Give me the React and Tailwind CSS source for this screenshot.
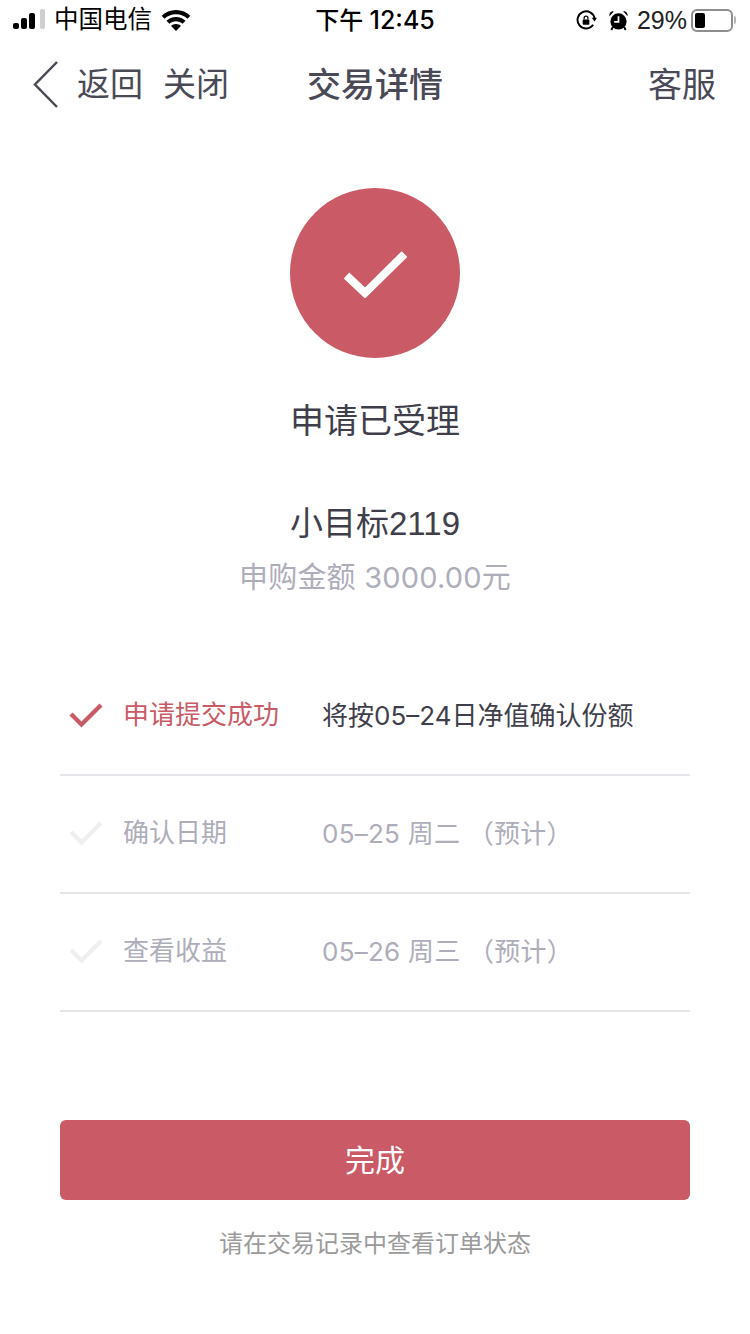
import React from 'react';

const FONT = "font-['Liberation_Sans','Noto_Sans_CJK_SC',sans-serif]";
// digits in the reference are wider than Arial's
const WIDE = "font-['Inter','Noto_Sans_CJK_SC',sans-serif]";

function Check({ className }) {
  return (
    <svg viewBox="0 0 34 26" className={className} fill="none" stroke="currentColor" strokeWidth="4.300">
      <path d="M2 12 L12.500 22.500 L32 3" />
    </svg>
  );
}

function StatusBar() {
  return (
    <div className="flex h-10 items-center justify-between pl-[13px] pr-[17px] text-black">
      <div className="flex w-[220px] items-center">
        <div className="mb-[2px] flex items-end gap-[2px]">
          <span className="h-[6px] w-[6px] rounded-[2px] bg-black" />
          <span className="h-[11px] w-[6px] rounded-[2px] bg-black" />
          <span className="h-[16px] w-[6px] rounded-[2px] bg-black" />
          <span className="ml-[3px] h-[20px] w-[5px] rounded-[2px] bg-[#cfcfcf]" />
        </div>
        <span className="ml-[9px] text-[24.500px] leading-none">中国电信</span>
        <svg viewBox="0 0 30 22" className="ml-[9px] h-[22px] w-[30px]" fill="black">
          <path d="M15 1C9.4 1 4.4 3.2 .7 6.7l2.8 3C6.500 6.900 10.500 5.200 15 5.200s8.500 1.700 11.500 4.500l2.800-3C25.600 3.200 20.600 1 15 1z" />
          <path d="M15 8C11.300 8 8 9.400 5.500 11.700l2.900 3C10.200 13.100 12.500 12.200 15 12.200s4.800.9 6.600 2.500l2.900-3C22 9.400 18.700 8 15 8z" />
          <path d="M15 15c-1.900 0-3.600.7-4.900 1.900L15 22l4.900-5.100C18.600 15.700 16.900 15 15 15z" />
        </svg>
      </div>
      <span className={`${WIDE} absolute left-0 right-0 text-center text-[24px] leading-none font-medium`}>
        下午 <span className="text-[25px]">12:45</span>
      </span>
      <div className="flex items-center">
        <svg viewBox="0 0 22 22" className="h-[21px] w-[21px]" fill="none" stroke="black" strokeWidth="2">
          <path d="M18 15.500A9 9 0 1 1 19.500 9" />
          <path d="M16.500 8h5.500l-2.500 4z" fill="black" stroke="none" />
          <rect x="7" y="10" width="7" height="5.500" rx="1" fill="black" stroke="none" />
          <path d="M8.500 10V8.500a2 2 0 0 1 4 0V10" strokeWidth="1.300" />
        </svg>
        <svg viewBox="0 0 22 22" className="ml-[11px] h-[21px] w-[21px]" fill="black">
          <circle cx="11" cy="12" r="8.500" />
          <path d="M1.500 6.500C1 3.500 3 1 6 1.500zM20.500 6.500C21 3.500 19 1 16 1.500z" />
          <path d="M11 6.500V12.500H6.500" fill="none" stroke="white" strokeWidth="1.800" />
          <path d="M5 18l-1.500 3M17 18l1.500 3" stroke="black" strokeWidth="2" />
        </svg>
        <span className="ml-[8px] text-[25px] leading-none text-[#222]">29%</span>
        <div className="relative ml-[4px] flex h-[23px] w-[42px] items-center rounded-[6px] border-2 border-[#8e8e8e] p-[2px]">
          <span className="h-full w-[10px] rounded-[2px] bg-black" />
          <span className="absolute right-[-5px] top-[5px] h-[8px] w-[2px] rounded-r-full bg-[#b5b5b5]" />
        </div>
      </div>
    </div>
  );
}

function NavBar() {
  return (
    <div className="relative flex h-[90px] items-center justify-between pl-[33px] pr-[34px] text-[33px] text-[#4a4a57]">
      <div className="flex items-center">
        <svg viewBox="0 0 26 50" className="h-[50px] w-[26px]" fill="none" stroke="currentColor" strokeWidth="2.500">
          <path d="M24 2 L2 24.500 L24 47" />
        </svg>
        <span className="ml-[18px]">返回</span>
        <span className="ml-[20px]">关闭</span>
      </div>
      <span className="absolute left-0 right-0 text-center text-[34px] font-medium">交易详情</span>
      <span className="text-[34px]">客服</span>
    </div>
  );
}

function StepRow({ active, label, detail }) {
  return (
    <div className="flex h-[118px] items-center border-b-2 border-[#e6e6ea] pb-[2px]">
      <Check className={`ml-[9px] h-[26px] w-[34px] ${active ? 'text-[#c95a66]' : 'text-[#efeff1]'}`} />
      <span className={`ml-[20px] w-[199px] text-[26px] ${active ? 'text-[#c95a66]' : 'text-[#aeaeba]'}`}>{label}</span>
      <span className={`${WIDE} text-[26px] ${active ? 'text-[#3f3f4c]' : 'tracking-[0.25px] text-[#aeaeba]'}`}>{detail}</span>
    </div>
  );
}

export default function App() {
  return (
    <div className={`${FONT} relative flex min-h-[1334px] w-[750px] flex-col bg-white`}>
      <StatusBar />
      <NavBar />

      <div className="mt-[58px] flex flex-col items-center">
        <div className="flex h-[170px] w-[170px] items-center justify-center rounded-full bg-[#c95a66]">
          <svg viewBox="0 0 64 50" className="h-[50px] w-[64px] text-white" fill="none" stroke="currentColor" strokeWidth="8">
            <path d="M3.500 27.500 L22 45 L61.500 6" />
          </svg>
        </div>
        <div className="mt-[43px] text-[34px] leading-[40px] text-[#3f3f4c]">申请已受理</div>
        <div className="mt-[63px] text-[33px] leading-[40px] text-[#3f3f4c]">小目标2119</div>
        <div className={`${WIDE} mt-[14px] text-[29px] leading-[40px] tracking-[0.2px] text-[#aeaeba]`}>申购金额 3000.00元</div>
      </div>

      <div className="mx-[60px] mt-[60px] flex flex-col">
        <StepRow active label="申请提交成功" detail="将按05–24日净值确认份额" />
        <StepRow label="确认日期" detail="05–25 周二 （预计）" />
        <StepRow label="查看收益" detail="05–26 周三 （预计）" />
      </div>

      <button className="mx-[60px] mt-[108px] h-[80px] rounded-[6px] bg-[#c95a66] text-[30px] text-white">完成</button>
      <div className="mt-[28px] text-center text-[24px] leading-[32px] text-[#9a9a9a]">请在交易记录中查看订单状态</div>
    </div>
  );
}
